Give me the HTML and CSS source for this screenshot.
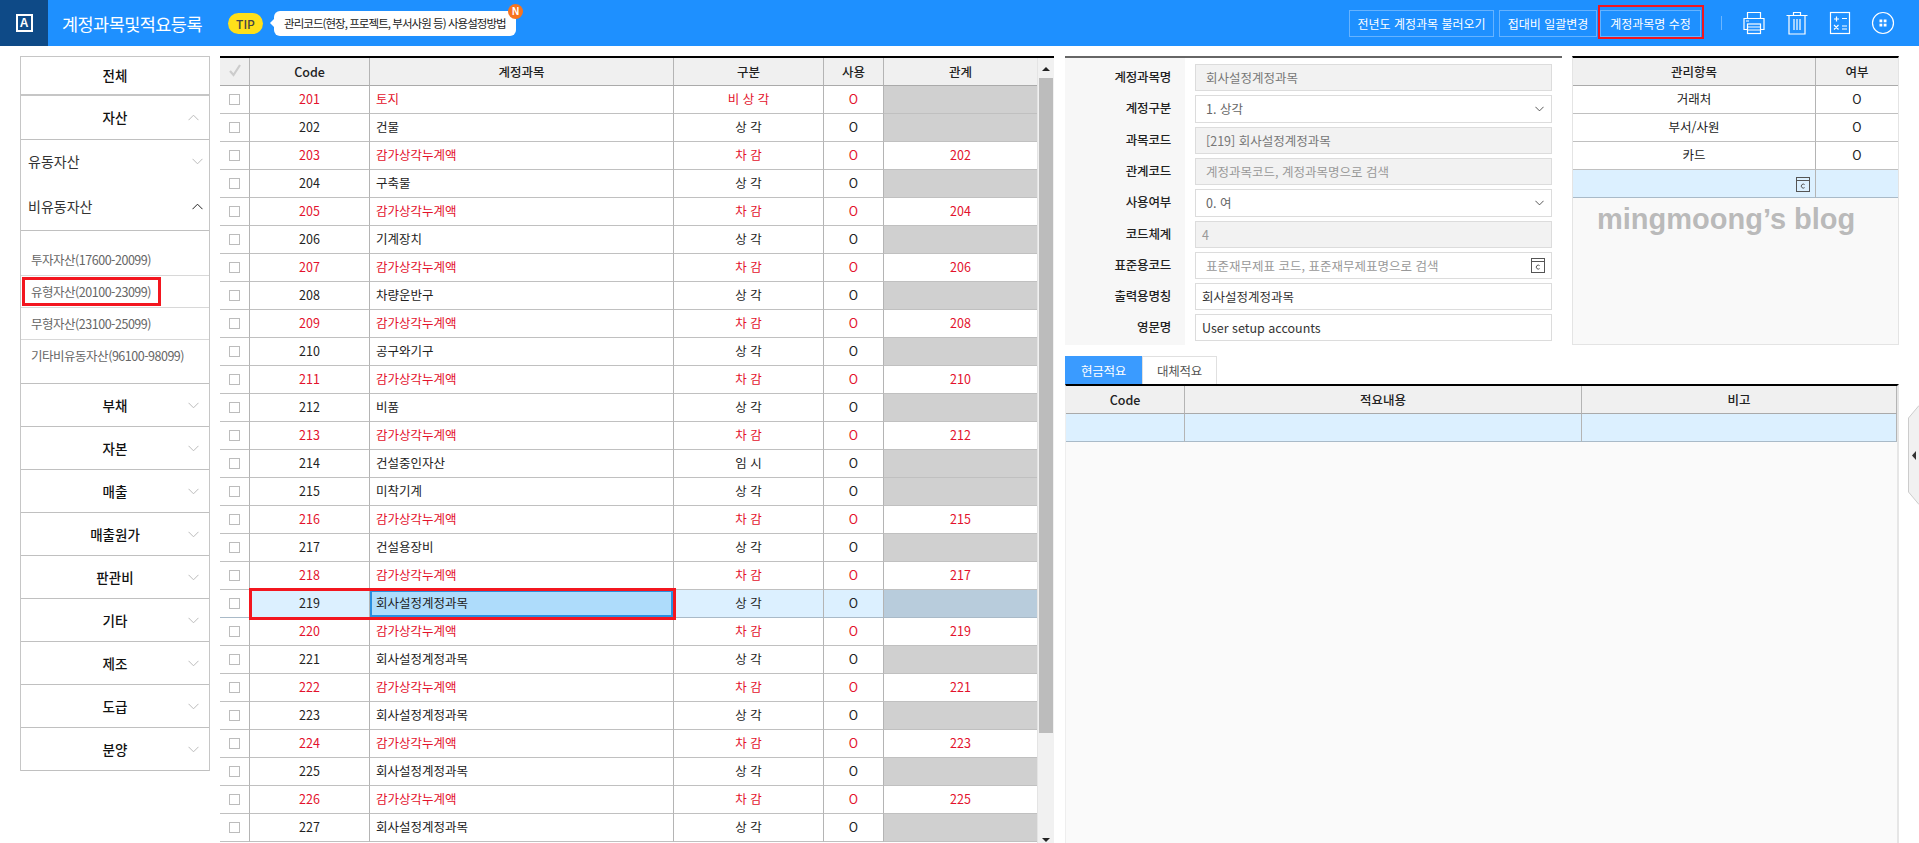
FILE: index.html
```html
<!DOCTYPE html>
<html lang="ko">
<head>
<meta charset="utf-8">
<title>계정과목및적요등록</title>
<link rel="stylesheet" href="styles.css">
</head>
<body>
<svg class="defs" width="0" height="0">
  <symbol id="down" viewBox="0 0 11 7"><path d="M.5 .8 5.5 5.8 10.5 .8" fill="none" stroke="currentColor"/></symbol>
  <symbol id="up" viewBox="0 0 11 7"><path d="M.5 6.2 5.5 1.2 10.5 6.2" fill="none" stroke="currentColor"/></symbol>
  <symbol id="cal" viewBox="0 0 14 15"><rect x=".5" y=".5" width="13" height="14" fill="none" stroke="#555"/><path d="M.5 3.5h13" stroke="#555"/><path d="M8.6 7.6a2 2 0 1 0 0 3" fill="none" stroke="#555"/></symbol>
</svg>
<header class="topbar">
  <div class="logo"><span class="logo-a">A</span></div>
  <h1 class="title">계정과목및적요등록</h1>
  <span class="tip">TIP</span>
  <div class="tooltip">관리코드(현장, 프로젝트, 부서사원 등) 사용설정방법<span class="badge">N</span></div>
  <div class="actions">
    <button class="btn">전년도 계정과목 불러오기</button>
    <button class="btn btn-b">접대비 일괄변경</button>
    <button class="btn btn-c">계정과목명 수정</button>
    <span class="sep"></span>
    <svg class="ico" viewBox="0 0 24 24" fill="none" stroke="#fff" stroke-width="1.2"><path d="M5.5 7V1.5h13V7"/><path d="M5.500 18.500H2V7.500h20v11h-3.500"/><rect x="5.500" y="13" width="13" height="9.500"/><path d="M5.500 16h13M5.500 19h13M4 10h3"/></svg>
    <svg class="ico" viewBox="0 0 24 24" fill="none" stroke="#fff" stroke-width="1.2"><path d="M1.500 4.500h21M8.500 4.500V1.500h7v3"/><path d="M4 4.500V23h16V4.500"/><path d="M9 8v11M12 8v11M15 8v11"/></svg>
    <svg class="ico" viewBox="0 0 24 24" fill="none" stroke="#fff" stroke-width="1.2"><rect x="2.500" y="1.500" width="19" height="21"/><path d="M6 8h5M8.500 5.500v5M14 7.500h5M6 14l4.500 4.500M10.500 14 6 18.500M14 15h5M14 18h5"/></svg>
    <svg class="ico" viewBox="0 0 24 24" fill="none" stroke="#fff" stroke-width="1.200"><circle cx="12" cy="12" r="10.500"/><rect x="8.500" y="8.500" width="2.800" height="2.800" fill="#fff" stroke="none"/><rect x="12.700" y="8.500" width="2.800" height="2.800" fill="#fff" stroke="none"/><rect x="8.500" y="12.700" width="2.800" height="2.800" fill="#fff" stroke="none"/><rect x="12.700" y="12.700" width="2.800" height="2.800" fill="#fff" stroke="none"/></svg>
  </div>
</header>

<main class="content">
  <nav class="menu">
    <div class="m-all">전체</div>
    <div class="m-row m-open"><span></span><span>자산</span><svg class="chev"><use href="#up"/></svg></div>
    <div class="m-sub">유동자산<svg class="chev"><use href="#down"/></svg></div>
    <div class="m-sub m-sub-open">비유동자산<svg class="chev dark"><use href="#up"/></svg></div>
    <ul class="m-list">
      <li>투자자산(17600-20099)</li>
      <li class="marked">유형자산(20100-23099)</li>
      <li>무형자산(23100-25099)</li>
      <li>기타비유동자산(96100-98099)</li>
    </ul>
    <div class="m-row"><span></span><span>부채</span><svg class="chev"><use href="#down"/></svg></div>
    <div class="m-row"><span></span><span>자본</span><svg class="chev"><use href="#down"/></svg></div>
    <div class="m-row"><span></span><span>매출</span><svg class="chev"><use href="#down"/></svg></div>
    <div class="m-row"><span></span><span>매출원가</span><svg class="chev"><use href="#down"/></svg></div>
    <div class="m-row"><span></span><span>판관비</span><svg class="chev"><use href="#down"/></svg></div>
    <div class="m-row"><span></span><span>기타</span><svg class="chev"><use href="#down"/></svg></div>
    <div class="m-row"><span></span><span>제조</span><svg class="chev"><use href="#down"/></svg></div>
    <div class="m-row"><span></span><span>도급</span><svg class="chev"><use href="#down"/></svg></div>
    <div class="m-row"><span></span><span>분양</span><svg class="chev"><use href="#down"/></svg></div>
  </nav>

  <section class="grid-wrap">
    <div class="grid-body">
      <table class="tbl main-tbl">
        <colgroup><col class="c1"><col class="c2"><col class="c3"><col class="c4"><col class="c5"><col class="c6"></colgroup>
        <thead><tr><th><svg class="chk-ico" viewBox="0 0 14 14"><path d="M2 8l3.500 4L12 2" fill="none" stroke="#ccc" stroke-width="2.200"/></svg></th><th>Code</th><th>계정과목</th><th>구분</th><th>사용</th><th>관계</th></tr></thead>
        <tbody>
          <tr class="red"><td><i class="cb"></i></td><td>201</td><td class="nm">토지</td><td>비 상 각</td><td>O</td><td class="off"></td></tr>
          <tr><td><i class="cb"></i></td><td>202</td><td class="nm">건물</td><td>상 각</td><td>O</td><td class="off"></td></tr>
          <tr class="red"><td><i class="cb"></i></td><td>203</td><td class="nm">감가상각누계액</td><td>차 감</td><td>O</td><td>202</td></tr>
          <tr><td><i class="cb"></i></td><td>204</td><td class="nm">구축물</td><td>상 각</td><td>O</td><td class="off"></td></tr>
          <tr class="red"><td><i class="cb"></i></td><td>205</td><td class="nm">감가상각누계액</td><td>차 감</td><td>O</td><td>204</td></tr>
          <tr><td><i class="cb"></i></td><td>206</td><td class="nm">기계장치</td><td>상 각</td><td>O</td><td class="off"></td></tr>
          <tr class="red"><td><i class="cb"></i></td><td>207</td><td class="nm">감가상각누계액</td><td>차 감</td><td>O</td><td>206</td></tr>
          <tr><td><i class="cb"></i></td><td>208</td><td class="nm">차량운반구</td><td>상 각</td><td>O</td><td class="off"></td></tr>
          <tr class="red"><td><i class="cb"></i></td><td>209</td><td class="nm">감가상각누계액</td><td>차 감</td><td>O</td><td>208</td></tr>
          <tr><td><i class="cb"></i></td><td>210</td><td class="nm">공구와기구</td><td>상 각</td><td>O</td><td class="off"></td></tr>
          <tr class="red"><td><i class="cb"></i></td><td>211</td><td class="nm">감가상각누계액</td><td>차 감</td><td>O</td><td>210</td></tr>
          <tr><td><i class="cb"></i></td><td>212</td><td class="nm">비품</td><td>상 각</td><td>O</td><td class="off"></td></tr>
          <tr class="red"><td><i class="cb"></i></td><td>213</td><td class="nm">감가상각누계액</td><td>차 감</td><td>O</td><td>212</td></tr>
          <tr><td><i class="cb"></i></td><td>214</td><td class="nm">건설중인자산</td><td>임 시</td><td>O</td><td class="off"></td></tr>
          <tr><td><i class="cb"></i></td><td>215</td><td class="nm">미착기계</td><td>상 각</td><td>O</td><td class="off"></td></tr>
          <tr class="red"><td><i class="cb"></i></td><td>216</td><td class="nm">감가상각누계액</td><td>차 감</td><td>O</td><td>215</td></tr>
          <tr><td><i class="cb"></i></td><td>217</td><td class="nm">건설용장비</td><td>상 각</td><td>O</td><td class="off"></td></tr>
          <tr class="red"><td><i class="cb"></i></td><td>218</td><td class="nm">감가상각누계액</td><td>차 감</td><td>O</td><td>217</td></tr>
          <tr class="sel"><td class="sel-first"><i class="cb"></i></td><td>219</td><td class="nm active">회사설정계정과목</td><td>상 각</td><td>O</td><td class="off"></td></tr>
          <tr class="red"><td><i class="cb"></i></td><td>220</td><td class="nm">감가상각누계액</td><td>차 감</td><td>O</td><td>219</td></tr>
          <tr><td><i class="cb"></i></td><td>221</td><td class="nm">회사설정계정과목</td><td>상 각</td><td>O</td><td class="off"></td></tr>
          <tr class="red"><td><i class="cb"></i></td><td>222</td><td class="nm">감가상각누계액</td><td>차 감</td><td>O</td><td>221</td></tr>
          <tr><td><i class="cb"></i></td><td>223</td><td class="nm">회사설정계정과목</td><td>상 각</td><td>O</td><td class="off"></td></tr>
          <tr class="red"><td><i class="cb"></i></td><td>224</td><td class="nm">감가상각누계액</td><td>차 감</td><td>O</td><td>223</td></tr>
          <tr><td><i class="cb"></i></td><td>225</td><td class="nm">회사설정계정과목</td><td>상 각</td><td>O</td><td class="off"></td></tr>
          <tr class="red"><td><i class="cb"></i></td><td>226</td><td class="nm">감가상각누계액</td><td>차 감</td><td>O</td><td>225</td></tr>
          <tr><td><i class="cb"></i></td><td>227</td><td class="nm">회사설정계정과목</td><td>상 각</td><td>O</td><td class="off"></td></tr>
        </tbody>
      </table>
      <div class="row-mark"></div>
    </div>
    <div class="scroll">
      <span class="arr-up"></span>
      <span class="thumb"></span>
      <span class="arr-down"></span>
    </div>
  </section>

  <section class="right">
    <div class="upper">
      <form class="form">
        <label>계정과목명</label><div class="f off-f">회사설정계정과목</div>
        <label>계정구분</label><div class="f sel-f">1. 상각<svg class="sel-chev"><use href="#down"/></svg></div>
        <label>과목코드</label><div class="f off-f">[219] 회사설정계정과목</div>
        <label>관계코드</label><div class="f off-f ph">계정과목코드, 계정과목명으로 검색</div>
        <label>사용여부</label><div class="f sel-f">0. 여<svg class="sel-chev"><use href="#down"/></svg></div>
        <label>코드체계</label><div class="f off-f ph tight">4</div>
        <label>표준용코드</label><div class="f ph">표준재무제표 코드, 표준재무제표명으로 검색<svg class="cal"><use href="#cal"/></svg></div>
        <label>출력용명칭</label><div class="f tight dark-t">회사설정계정과목</div>
        <label>영문명</label><div class="f tight dark-t">User setup accounts</div>
      </form>
      <div class="mgmt">
        <table class="tbl mgmt-tbl">
          <colgroup><col class="m1"><col></colgroup>
          <thead><tr><th>관리항목</th><th>여부</th></tr></thead>
          <tbody>
            <tr><td>거래처</td><td>O</td></tr>
            <tr><td>부서/사원</td><td>O</td></tr>
            <tr><td>카드</td><td>O</td></tr>
            <tr class="sel"><td class="cal-cell"><svg class="cal"><use href="#cal"/></svg></td><td></td></tr>
          </tbody>
        </table>
        <p class="wm">mingmoong’s blog</p>
      </div>
    </div>
    <div class="tabs"><span class="tab on">현금적요</span><span class="tab">대체적요</span></div>
    <div class="lower">
      <table class="tbl low-tbl">
        <colgroup><col class="l1"><col class="l2"><col></colgroup>
        <thead><tr><th>Code</th><th>적요내용</th><th>비고</th></tr></thead>
        <tbody><tr class="sel"><td></td><td></td><td></td></tr></tbody>
      </table>
    </div>
  </section>
</main>
<svg class="handle" viewBox="0 0 11 100"><path d="M11 .5 .5 13V87L11 99.500" fill="#f1f1f1" stroke="#ccc"/><path d="M4 50.500 8 46V55z" fill="#333"/></svg>
</body>
</html>
```
FILE: styles.css
```css
*, *::before, *::after { box-sizing: border-box; }
html, body { margin: 0; height: 843px; overflow: hidden; background: #fff; }
body { position: relative; font: 13px/1.2 "Noto Sans CJK KR", "Noto Sans", sans-serif; color: #222; }
.defs { position: absolute; }

/* top bar */
.topbar { height: 46px; background: #1e90ff; display: flex; align-items: center; color: #fff; }
.logo { width: 48px; height: 46px; background: #0e4a87; display: flex; align-items: center; justify-content: center; }
.logo-a { width: 17px; height: 18px; border: 2px solid #fff; font: 700 12px/14px "Liberation Sans", sans-serif; text-align: center; }
.title { margin: 0 0 0 14px; font-size: 17.500px; font-weight: 400; letter-spacing: -.55px; width: 166px; white-space: nowrap; }
.tip { width: 35px; height: 21px; border-radius: 11px; background: #ffe01a; color: #444; font: 500 12px/21px "Noto Sans CJK KR", sans-serif; text-align: center; }
.tooltip { position: relative; margin-left: 11px; width: 242px; height: 25px; padding-left: 10px; border-radius: 6px; background: #fff; color: #222; font-size: 11.500px; letter-spacing: -.95px; line-height: 25px; white-space: nowrap; }
.tooltip::before { content: ""; position: absolute; left: -4px; top: 8px; width: 4px; height: 8px; border: 4px solid transparent; border-left: 0; border-right-color: #fff; }
.badge { position: absolute; left: 234px; top: -7px; width: 15px; height: 15px; border-radius: 50%; background: #f7741f; color: #fff; font: 700 10px/15px "Liberation Sans", sans-serif; text-align: center; letter-spacing: 0; }
.actions { margin-left: auto; padding-right: 24px; display: flex; align-items: center; }
.btn { height: 27px; padding: 0; border: 1px solid rgba(255,255,255,.32); background: transparent; color: #fff; font: 12px "Noto Sans CJK KR", sans-serif; width: 145px; }
.btn-b { width: 98px; margin-left: 5px; }
.btn-c { width: 101px; margin-left: 3px; position: relative; }
.btn-c::after { content: ""; position: absolute; left: -3px; right: -4px; top: -6px; bottom: -3px; border: 2px solid #f3161f; }
.sep { width: 1px; height: 14px; margin: 0 20px; background: rgba(255,255,255,.35); }
.ico { width: 24px; height: 24px; margin-right: 19px; }
.ico:last-child { margin-right: 0; }

/* content */
.content { height: 797px; padding: 10px 20px 0; display: flex; overflow: hidden; }

/* left menu */
.menu { width: 190px; height: 715px; margin-right: 10px; border: 1px solid #c6c6c6; border-bottom: 0; flex: none; }
.m-all { height: 39px; border-bottom: 2px solid #c6c6c6; text-align: center; line-height: 37px; font-size: 13.500px; font-weight: 500; color: #111; }
.m-row { height: 43px; border-bottom: 1px solid #c0c0c0; display: grid; grid-template-columns: 1fr auto 1fr; align-items: center; font-size: 13.500px; font-weight: 500; color: #111; }
.m-open { height: 44px; }
.chev { width: 11px; height: 7px; color: #bbb; justify-self: end; }
.m-row .chev { margin-right: 10px; }
.chev.dark { color: #222; }
.m-sub { height: 45px; display: flex; align-items: center; justify-content: space-between; padding: 0 6px 2px 7px; font-size: 14px; color: #333; }
.m-sub-open { height: 46px; border-bottom: 1px solid #c0c0c0; }
.m-list { margin: 0; padding: 13px 0 11px; list-style: none; border-bottom: 1px solid #c0c0c0; }
.m-list li { height: 32px; padding-left: 10px; line-height: 31px; border-bottom: 1px solid #d8d8d8; color: #666; font-size: 12.500px; letter-spacing: -.48px; white-space: nowrap; position: relative; }
.m-list li:last-child { border-bottom: 0; }
.marked::after { content: ""; position: absolute; left: 1px; top: 1px; width: 139px; height: 29px; border: 3px solid #f3161f; }

/* grid */
.grid-wrap { width: 834px; height: 787px; flex: none; margin-right: 11px; border-top: 2px solid #000; display: flex; }
.grid-body { width: 817px; position: relative; }
.tbl { width: 100%; border-collapse: separate; border-spacing: 0; table-layout: fixed; }
.tbl th, .tbl td { height: 28px; padding: 0; border-right: 1px solid #b4b4b4; border-bottom: 1px solid #c0c0c0; text-align: center; font-size: 12.500px; font-weight: 400; color: #222; overflow: hidden; white-space: nowrap; }
.tbl td { padding-bottom: 2px; }
.tbl th { background: #f0f0f0; font-weight: 500; color: #222; border-bottom-color: #aaa; }
.tbl td:last-child, .tbl th:last-child { border-right: 0; }
.c1 { width: 30px; } .c2 { width: 120px; } .c3 { width: 304px; } .c4 { width: 150px; } .c5 { width: 60px; } .c6 { width: 153px; }
.chk-ico { width: 14px; height: 14px; display: block; margin: 0 auto 3px; }
.cb { display: block; width: 11px; height: 11px; margin: 0 auto; border: 1px solid #bcbcbc; background: #fff; }
.main-tbl td:first-child { padding-bottom: 0; }
.main-tbl .nm { text-align: left; padding-left: 6px; }
.tbl .red td { color: #e3122c; }
.tbl .off { background: #d0d0d0; }
.tbl .sel td { background: #dcf0ff; border-bottom-color: #a9bac8; }
.tbl .sel-first, .main-tbl .sel td:first-child { background: #fff; }
.tbl .sel .off { background: #b8ccdc; }
.tbl .sel .active { background: #aedcfb; box-shadow: inset 0 0 0 2px #2a8fe0; }
.row-mark { position: absolute; left: 29px; top: 530px; width: 427px; height: 32px; border: 3px solid #f3161f; pointer-events: none; }

/* scrollbar */
.scroll { width: 17px; background: #f1f1f1; border-left: 1px solid #e4e4e4; position: relative; padding: 0 1px; display: flex; flex-direction: column; align-items: center; }
.arr-up { margin-top: 9px; width: 8px; height: 4px; border: 4px solid transparent; border-top: 0; border-bottom-color: #222; }
.thumb { width: 14px; height: 655px; margin-top: 7px; background: #bcbcbc; }
.arr-down { margin-top: 105px; width: 8px; height: 4px; border: 4px solid transparent; border-bottom: 0; border-top-color: #222; }

/* right */
.right { width: 834px; flex: none; display: flex; flex-direction: column; }
.upper { height: 289px; display: flex; gap: 10px; }
.form { width: 497px; border-top: 2px solid #666; background: linear-gradient(to right, #f7f7f7 120px, transparent 120px); padding: 6px 10px 4px 0; display: grid; grid-template-columns: 120px 1fr; grid-template-rows: 27px 28px 27px 27px 28px 27px 27px 27px 27px; column-gap: 10px; row-gap: 4px; }
.form label { text-align: right; padding-right: 14px; line-height: 26px; font-size: 12.500px; font-weight: 500; color: #222; letter-spacing: -.2px; }
.f { position: relative; border: 1px solid #dcdcdc; padding-left: 10px; line-height: 25px; font-size: 12.500px; color: #777; }
.off-f { background: #f2f2f2; }
.ph { color: #999; }
.tight { padding-left: 6px; }
.dark-t { color: #333; }
.sel-f { color: #666; }
.sel-chev { position: absolute; right: 7px; top: 10px; width: 9px; height: 6px; color: #333; }
.cal { width: 14px; height: 15px; }
.f .cal { position: absolute; right: 6px; top: 5px; }
.mgmt { width: 327px; border: 1px solid #e4e4e4; border-top: 2px solid #000; background: #f9f9f9; }
.m1 { width: 243px; }
.mgmt-tbl td { background: #fff; }
.mgmt-tbl .cal-cell { text-align: right; padding: 0 5px 0 0; }
.cal-cell .cal { vertical-align: middle; }
.wm { margin: 4px 0 0 24px; font: 700 29px/1.2 "Liberation Sans", sans-serif; color: #bababa; white-space: nowrap; }

.tabs { display: flex; margin-top: 11px; height: 28px; }
.tab { width: 75px; border: 1px solid #e0e0e0; border-bottom: 0; text-align: center; line-height: 27px; font-size: 12.500px; color: #555; letter-spacing: -.3px; }
.tab.on { width: 77px; background: #3a9bff; border-color: #3a9bff; color: #fff; }
.lower { flex: 1; border-top: 2px solid #000; border-right: 2px solid #e6e6e6; border-left: 1px solid #eee; background: #fafafa; }
.l1 { width: 119px; } .l2 { width: 397px; }
.low-tbl th:last-child, .low-tbl td:last-child { border-right: 1px solid #b4b4b4; }

.handle { position: absolute; right: 0; top: 405px; width: 11px; height: 100px; }
```
